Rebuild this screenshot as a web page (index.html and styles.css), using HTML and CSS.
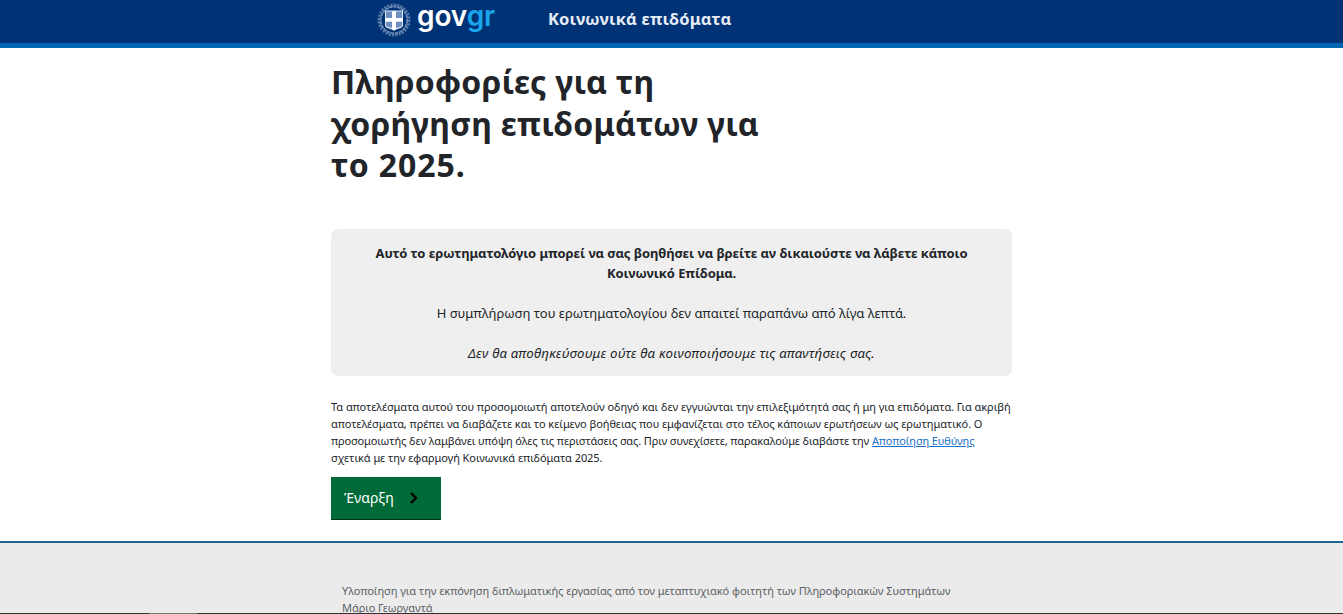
FILE: index.html
```html
<!DOCTYPE html>
<html lang="el">
<head>
<meta charset="utf-8">
<title>Κοινωνικά επιδόματα</title>
<link rel="stylesheet" href="styles.css">
</head>
<body>
<header class="header">
  <div class="brand">
    <svg class="emblem" viewBox="0 0 34 34" width="34" height="34">
      <g fill="none" stroke="#a9bcdb">
        <circle cx="17" cy="17" r="15.300" stroke-width="2.400" stroke-dasharray="2.200 1.200" opacity=".5"/>
        <circle cx="17" cy="17" r="13.300" stroke-width="1.800" stroke-dasharray="3.500 .6" opacity=".65"/>
      </g>
      <path d="M8 7.500h18v15c0 2.500-5 3-9 5-4-2-9-2.500-9-5z" fill="#dfe7f4"/>
      <path d="M9 8.500h6v6.500h-6zM19 8.500h6v6.500h-6zM9 18.500h6v6.500c-4-1-6-1.500-6-3zM19 18.500h6v3.500c0 1.500-2 2-6 3z" fill="#6f8fc0"/>
      <path d="M15 8h4v7h6.500v3.500h-6.500v8l-2 1-2-1v-8h-6.500v-3.500h6.500z" fill="#fff"/>
    </svg>
    <span class="wordmark">gov<span class="wordmark-gr">gr</span></span>
  </div>
  <span class="service">Κοινωνικά επιδόματα</span>
</header>
<main class="main">
  <h1 class="title">Πληροφορίες για τη<br>χορήγηση επιδομάτων για<br><span class="year">το 2025.</span></h1>
  <section class="notice">
    <p class="lead"><b>Αυτό το ερωτηματολόγιο μπορεί να σας βοηθήσει να βρείτε αν δικαιούστε να λάβετε κάποιο<br>Κοινωνικό Επίδομα.</b></p>
    <p class="duration">Η συμπλήρωση του ερωτηματολογίου δεν απαιτεί παραπάνω από λίγα λεπτά.</p>
    <p class="privacy">Δεν θα αποθηκεύσουμε ούτε θα κοινοποιήσουμε τις απαντήσεις σας.</p>
  </section>
  <p class="disclaimer">Τα αποτελέσματα αυτού του προσομοιωτή αποτελούν οδηγό και δεν εγγυώνται την επιλεξιμότητά σας ή μη για επιδόματα. Για ακριβή<br>αποτελέσματα, πρέπει να διαβάζετε και το κείμενο βοήθειας που εμφανίζεται στο τέλος κάποιων ερωτήσεων ως ερωτηματικό. Ο<br><span class="tight">προσομοιωτής δεν λαμβάνει υπόψη όλες τις περιστάσεις σας. Πριν συνεχίσετε, παρακαλούμε διαβάστε την <a class="link" href="#">Αποποίηση Ευθύνης</a></span><br>σχετικά με την εφαρμογή Κοινωνικά επιδόματα 2025.</p>
  <button class="start" type="button">Έναρξη
    <svg width="10" height="12" viewBox="0 0 10 12"><path d="M2 1l5 5-5 5" fill="none" stroke="#000" stroke-width="2.300"/></svg>
  </button>
</main>
<footer class="footer">
  <p class="credit">Υλοποίηση για την εκπόνηση διπλωματικής εργασίας από τον μεταπτυχιακό φοιτητή των Πληροφοριακών Συστημάτων<br>Μάριο Γεωργαντά</p>
  <div class="edge"><div class="edge-tab"></div></div>
</footer>
</body>
</html>
```
FILE: styles.css
```css
* { box-sizing: border-box; }
body {
  margin: 0;
  height: 614px;
  overflow: hidden;
  display: flex;
  flex-direction: column;
  background: #fff;
  color: #212529;
  font-family: "Noto Sans", "Open Sans", sans-serif;
}
p, h1 { margin: 0; white-space: nowrap; }
.header {
  flex: none;
  height: 48px;
  padding-left: 377px;
  display: flex;
  align-items: flex-start;
  background: #003375;
  border-bottom: 5px solid #0065b3;
}
.brand { width: 171px; display: flex; align-items: flex-start; gap: 6px; padding-top: 3px; }
.emblem { flex: none; }
.wordmark {
  font: 600 28px/34px Inter, sans-serif;
  letter-spacing: -0.1px;
  color: #fff;
  margin-top: -4px;
}
.wordmark-gr { color: #1ba5ec; }
.service { font-size: 16.500px; letter-spacing: 0.17px; font-weight: 700; line-height: 24px; color: #e6ecf5; padding-top: 7px; }
.main { flex: none; width: 681px; height: 493px; margin-left: 331px; }
.title { padding-top: 13px; font-size: 32px; letter-spacing: 0.24px; line-height: 41.500px; font-weight: 700; }
.year { letter-spacing: 0.9px; }
.notice {
  margin-top: 43px;
  height: 147px;
  padding-top: 14px;
  border-radius: 7px;
  background: #efefef;
  text-align: center;
  font-size: 13px;
  line-height: 20px;
  display: flex;
  flex-direction: column;
  align-items: center;
  gap: 20px;
}
.lead { letter-spacing: -0.07px; }
.duration { letter-spacing: -0.02px; }
.privacy { font-style: italic; font-size: 13.300px; letter-spacing: 0.22px; }
.disclaimer { margin-top: 22px; font-size: 11px; letter-spacing: -0.06px; line-height: 17px; }
.tight { letter-spacing: -0.11px; }
.link { color: #1d70c8; }
.start {
  margin-top: 11px;
  width: 110px;
  height: 43px;
  padding: 0 0 0 13px;
  border: 0;
  border-bottom: 1px solid #003618;
  background: #006a39;
  color: #fff;
  font: 14px/20px "Noto Sans", sans-serif;
  display: flex;
  align-items: center;
  gap: 15px;
}
.footer {
  flex: 1;
  border-top: 2px solid #1c6690;
  background: #ebebeb;
  position: relative;
  overflow: hidden;
}
.credit { padding: 39px 0 0 342px; font-size: 11px; letter-spacing: -0.05px; line-height: 17px; color: #5b5f63; }
.edge { position: absolute; left: 0; right: 0; bottom: 0; height: 1px; padding-left: 149px; background: #303030; }
.edge-tab { width: 48px; height: 1px; background: #777; }
```
